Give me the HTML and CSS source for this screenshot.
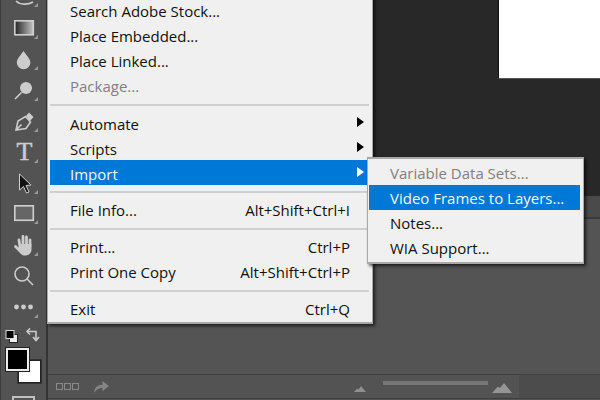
FILE: index.html
```html
<!DOCTYPE html>
<html lang="en">
<head>
  <meta charset="UTF-8">
  <title>Import menu</title>
  <link rel="stylesheet" href="styles.css">
</head>
<body>
  <div class="app">
    <div class="toolbar">
      <svg class="tool" viewBox="0 0 46 31"><path class="line" d="M18 14 L30 3 M16 20 C20 24 28 24 33 21"/><polygon class="corner" points="34,26 38,26 38,22"/></svg>
      <svg class="tool" viewBox="0 0 46 31">
        <defs><linearGradient id="grad"><stop offset="0" stop-color="#222"/><stop offset="1" stop-color="#c4c4c4"/></linearGradient></defs>
        <rect x="14.8" y="8.8" width="18.5" height="14" fill="url(#grad)" stroke="#d0d0d0" stroke-width="1.6"/>
        <polygon class="corner" points="34,27 38,27 38,23"/>
      </svg>
      <svg class="tool" viewBox="0 0 46 31"><path class="solid" d="M23.5 8 C20 13 16.8 16 16.8 19.5 A6.8 6.8 0 0 0 30.4 19.5 C30.4 16 27 13 23.5 8 Z"/><polygon class="corner" points="34,27 38,27 38,23"/></svg>
      <svg class="tool" viewBox="0 0 46 31"><circle class="solid" cx="26" cy="14" r="6"/><path class="line" d="M21.5 18.5 L15 25" stroke-width="2"/><polygon class="corner" points="34,27 38,27 38,23"/></svg>
      <svg class="tool" viewBox="0 0 46 31"><path class="line" d="M16 25 L18 16 L25.5 11.5 L30.5 17 L26 23.5 Z M16 25 L21.5 19.5"/><polygon class="solid" points="26,11 29,7.5 33.5,12 30,16"/><polygon class="corner" points="34,27 38,27 38,23"/></svg>
      <svg class="tool" viewBox="0 0 46 31"><text class="type-tool" x="24.5" y="24" text-anchor="middle">T</text><polygon class="corner" points="34,27 38,27 38,23"/></svg>
      <svg class="tool" viewBox="0 0 46 31"><path d="M19.5 7 L19.5 23 L23.5 19.5 L26.5 26 L29 25 L26 18.5 L31 18 Z" fill="#111" stroke="#cfcfcf" stroke-width="1"/><polygon class="corner" points="34,27 38,27 38,23"/></svg>
      <svg class="tool" viewBox="0 0 46 31"><rect x="14.8" y="7.8" width="18.5" height="14.5" fill="#666" stroke="#d0d0d0" stroke-width="1.6"/><polygon class="corner" points="34,26 38,26 38,22"/></svg>
      <svg class="tool" viewBox="0 0 46 31">
        <path class="finger" d="M20 18 L19 11 M23 16 L23 7.5 M26.5 16 L26.5 8 M30 17 L30 11 M21 23 L15.5 17.5"/>
        <path class="solid" d="M19 15 H31.5 V20 C31.5 24 29 26.5 25 26.5 C22 26.5 20.5 25 19 22 Z"/>
        <polygon class="corner" points="34,27 38,27 38,23"/>
      </svg>
      <svg class="tool" viewBox="0 0 46 31"><circle class="line" cx="22" cy="14" r="7"/><path class="line" d="M27 19 L33 25" stroke-width="2.6"/></svg>
      <svg class="tool" viewBox="0 0 46 31"><circle class="solid" cx="16.5" cy="16" r="2.4"/><circle class="solid" cx="23.5" cy="16" r="2.4"/><circle class="solid" cx="30.5" cy="16" r="2.4"/><polygon class="corner" points="34,27 38,27 38,23"/></svg>

      <svg class="mini-tools" viewBox="0 0 46 16">
        <rect x="9.5" y="6.5" width="8" height="8" fill="#eee" stroke="#222"/>
        <rect x="6" y="2.5" width="8" height="8" fill="#000" stroke="#ddd"/>
        <path class="line" d="M28 3.5 H36 V12" stroke-width="1.8"/>
        <path class="line" d="M30 0.5 L27 3.5 L30 6.5 M33 9 L36 12.5 L39 9" stroke-width="1.6"/>
      </svg>

      <div class="swatches">
        <div class="swatch-bg"></div>
        <div class="swatch-fg"></div>
      </div>
      <div class="tool-stub"></div>
    </div>

    <div class="workspace">
      <div class="canvas">
        <div class="doc"></div>
      </div>
      <div class="tabs-band"></div>
      <div class="panel"></div>
      <div class="panel-bar">
        <div class="bar-main">
          <div class="bar-left">
            <span class="frame-box"></span><span class="frame-box"></span><span class="frame-box"></span>
            <svg class="share" viewBox="0 0 16 13"><path d="M0 13 C0 7 4 4 9 4 V0 L16 5.5 L9 11 V7.5 C5 7.5 2.5 9 0 13 Z"/></svg>
          </div>
          <div class="bar-right">
            <svg class="mount-small" viewBox="0 0 12 6"><path d="M0 6 L3 2.5 L4.5 3.5 L7 0 L12 6 Z"/></svg>
            <div class="slider"></div>
            <svg class="mount-big" viewBox="0 0 20 10"><path d="M0 10 L6 3.5 L8 5 L12 0 L20 10 Z"/></svg>
          </div>
        </div>
        <div class="bar-rest"></div>
      </div>
    </div>

    <div class="menu">
      <div class="menu-row">Search Adobe Stock...</div>
      <div class="menu-row">Place Embedded...</div>
      <div class="menu-row">Place Linked...</div>
      <div class="menu-row disabled">Package...</div>
      <div class="menu-sep sep-a"></div>
      <div class="menu-row">Automate <span class="arrow"></span></div>
      <div class="menu-row">Scripts <span class="arrow"></span></div>
      <div class="menu-row active">Import <span class="arrow"></span></div>
      <div class="menu-sep sep-b"></div>
      <div class="menu-row">File Info... <span>Alt+Shift+Ctrl+I</span></div>
      <div class="menu-sep"></div>
      <div class="menu-row">Print... <span>Ctrl+P</span></div>
      <div class="menu-row">Print One Copy <span>Alt+Shift+Ctrl+P</span></div>
      <div class="menu-sep"></div>
      <div class="menu-row">Exit <span>Ctrl+Q</span></div>
    </div>

    <div class="submenu">
      <div class="menu-row disabled">Variable Data Sets...</div>
      <div class="menu-row active">Video Frames to Layers...</div>
      <div class="menu-row">Notes...</div>
      <div class="menu-row">WIA Support...</div>
    </div>
  </div>
</body>
</html>
```

FILE: styles.css
```css
body {
  margin: 0;
  font-family: "Open Sans", "Noto Sans", sans-serif;
  background-color: #535353;
}

.app {
  display: flex;
  position: relative;
  width: 600px;
  height: 400px;
  overflow: hidden;
}

.toolbar {
  display: flex;
  flex-direction: column;
  flex-shrink: 0;
  width: 46px;
  height: 400px;
  background-color: #535353;
  border-left: 1px solid #3c3c3c;
  box-sizing: border-box;
  overflow: hidden;
}

.tool {
  display: block;
  flex-shrink: 0;
  width: 46px;
  height: 31px;
  margin-left: -1px;
}

.tool:first-child {
  margin-top: -19px;
}

.line {
  fill: none;
  stroke: #cccccc;
  stroke-width: 1.6;
}

.solid {
  fill: #cccccc;
}

.finger {
  fill: none;
  stroke: #cccccc;
  stroke-width: 2.8;
  stroke-linecap: round;
}

.corner {
  fill: #9a9a9a;
}

.type-tool {
  font-family: "Liberation Serif", serif;
  font-size: 26px;
  fill: #cccccc;
  stroke: #cccccc;
  stroke-width: 0.5;
}

.mini-tools {
  display: block;
  flex-shrink: 0;
  width: 46px;
  height: 16px;
  margin: 6px 0 0 -1px;
}

.swatches {
  position: relative;
  flex-shrink: 0;
  height: 36px;
  margin-top: 4px;
}

.swatch-fg,
.swatch-bg {
  position: absolute;
  box-sizing: border-box;
  width: 23px;
  height: 23px;
  border: 1px solid #222;
}

.swatch-fg {
  left: 5px;
  top: 0;
  background-color: #000;
  outline: 1px solid #222;
  border: 2px solid #ededed;
}

.swatch-bg {
  left: 17px;
  top: 12px;
  background-color: #fff;
  outline: 1px solid #333;
}

.tool-stub {
  flex-shrink: 0;
  width: 23px;
  height: 8px;
  margin: 12px 0 0 11px;
  border: 2px solid #c0c0c0;
  box-sizing: border-box;
}

.workspace {
  display: flex;
  flex-direction: column;
  flex: 1;
  border-left: 2px solid #333;
}

.canvas {
  display: flex;
  justify-content: flex-end;
  align-items: flex-start;
  height: 196px;
  background-color: #282828;
}

.doc {
  width: 102px;
  height: 79px;
  background-color: #fff;
  border-left: 1px solid #111;
  border-bottom: 1px solid #555;
  box-sizing: border-box;
}

.tabs-band {
  height: 21px;
  background-color: #4a4a4a;
  border-bottom: 2px solid #3a3a3a;
}

.panel {
  flex: 1;
  background-color: #545454;
  border-bottom: 1px solid #404040;
}

.panel-bar {
  display: flex;
  height: 23px;
  margin-bottom: 1px;
  border-bottom: 1px solid #3f3f3f;
}

.bar-main {
  display: flex;
  justify-content: space-between;
  width: 471px;
  background-color: #535353;
}

.bar-rest {
  flex: 1;
  background-color: #4c4c4c;
}

.bar-left {
  display: flex;
  align-items: center;
  gap: 1px;
  padding-left: 8px;
}

.frame-box {
  width: 5px;
  height: 5px;
  border: 1px solid #8a8a8a;
}

.share {
  width: 15px;
  height: 12px;
  margin-left: 14px;
  fill: #858585;
}

.bar-right {
  display: flex;
  align-items: center;
  padding-right: 7px;
}

.mount-small {
  width: 12px;
  height: 6px;
  margin-top: 4px;
  fill: #8f8f8f;
}

.slider {
  width: 105px;
  height: 4px;
  margin: 0 4px 8px 17px;
  background-color: #777;
}

.mount-big {
  width: 20px;
  height: 10px;
  margin-top: 3px;
  fill: #959595;
}

.menu,
.submenu {
  position: absolute;
  box-sizing: border-box;
  font-size: 15px;
  color: #111;
  background-color: #f0f0f0;
  border: 1px solid #a8a8a8;
  box-shadow: 2px 2px 3px rgba(0, 0, 0, 0.65);
}

.menu {
  left: 47px;
  top: -5px;
  width: 326px;
  height: 329px;
  padding: 1px 3px 0 2px;
  border-bottom-width: 2px;
}

.submenu {
  left: 367px;
  top: 157px;
  width: 217px;
  height: 107px;
  padding: 1px 3px 0 1px;
  border-width: 2px 1px 2px 1px;
}

.menu-row {
  display: flex;
  justify-content: space-between;
  box-sizing: border-box;
  height: 25px;
  padding: 4px 19px 0 20px;
  line-height: 21px;
  white-space: nowrap;
}

.submenu .menu-row {
  padding: 3px 0 0 21px;
}

.menu-row.disabled {
  color: #808080;
}

.menu-row.active {
  background-color: #0078d7;
  color: #f2f7fb;
}

.arrow {
  width: 0;
  height: 0;
  margin: 3px -14px 0 0;
  border-left: 7px solid #000;
  border-top: 5px solid transparent;
  border-bottom: 5px solid transparent;
}

.active .arrow {
  border-left-color: #fff;
}

.menu-sep {
  height: 2px;
  margin: 7px 0 3px;
  background-color: #cfcfcf;
}

.sep-a {
  margin: 7px 0 4px;
}

.sep-b {
  margin: 6px 0 3px;
}
```
